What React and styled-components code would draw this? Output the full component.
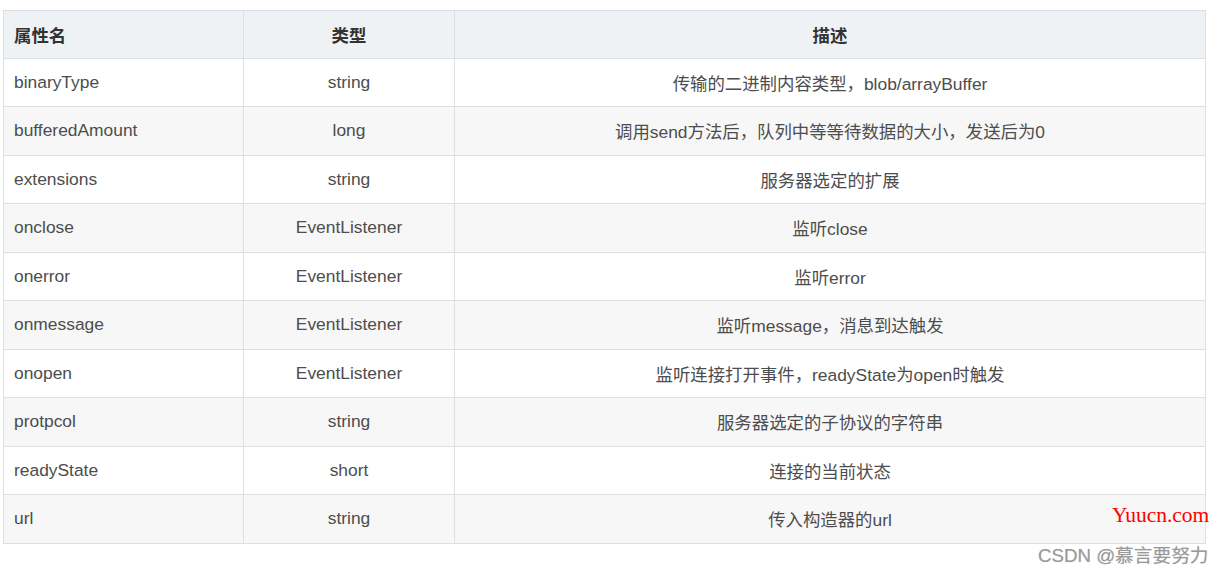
import React from 'react'
import styled, { createGlobalStyle } from 'styled-components'

const GlobalStyle = createGlobalStyle`
  html, body {
    margin: 0;
    padding: 0;
    background: #fff;
  }
  body {
    font-family: "Liberation Sans", Arial, "Noto Sans CJK SC", sans-serif;
  }
`

const Page = styled.div`
  position: relative;
  width: 1222px;
  height: 571px;
  padding: 10px 0 0 3px;
  box-sizing: border-box;
  overflow: hidden;
`

const Table = styled.table`
  border-collapse: collapse;
  table-layout: fixed;
  width: 1202px;
  font-size: 17.4px;
  color: #4d4d4d;
`

const HeadCell = styled.th`
  height: 47.5px;
  padding: 0 10px;
  border: 1px solid #dcdfe3;
  background: #eff2f5;
  color: #333;
  font-weight: bold;
  font-size: 17.4px;
  text-align: ${p => (p.$left ? 'left' : 'center')};
  box-sizing: border-box;
`

const Row = styled.tr`
  background: ${p => (p.$striped ? '#f7f7f7' : '#fff')};
`

const Cell = styled.td`
  height: 48.5px;
  padding: 0 10px;
  border: 1px solid #dcdfe3;
  text-align: ${p => (p.$left ? 'left' : 'center')};
  box-sizing: border-box;
  white-space: nowrap;
`

const Mark = styled.span`
  position: absolute;
  left: 1112px;
  top: 503px;
  color: #ff0000;
  font-family: "Liberation Serif", "Times New Roman", serif;
  font-size: 21.5px;
`

const Credit = styled.span`
  position: absolute;
  left: 1038px;
  top: 540px;
  color: #9a9a9a;
  font-family: "Liberation Sans", "Noto Sans CJK SC", sans-serif;
  font-size: 18.7px;
  text-shadow: 0 0 1px rgba(0, 0, 0, 0.2);
`

const rows = [
  ['binaryType', 'string', '传输的二进制内容类型，blob/arrayBuffer'],
  ['bufferedAmount', 'long', '调用send方法后，队列中等等待数据的大小，发送后为0'],
  ['extensions', 'string', '服务器选定的扩展'],
  ['onclose', 'EventListener', '监听close'],
  ['onerror', 'EventListener', '监听error'],
  ['onmessage', 'EventListener', '监听message，消息到达触发'],
  ['onopen', 'EventListener', '监听连接打开事件，readyState为open时触发'],
  ['protpcol', 'string', '服务器选定的子协议的字符串'],
  ['readyState', 'short', '连接的当前状态'],
  ['url', 'string', '传入构造器的url'],
]

export default function App() {
  return (
    <>
      <GlobalStyle />
      <Page>
        <Table>
          <colgroup>
            <col style={{ width: 240 }} />
            <col style={{ width: 211 }} />
            <col style={{ width: 751 }} />
          </colgroup>
          <thead>
            <tr>
              <HeadCell $left>属性名</HeadCell>
              <HeadCell>类型</HeadCell>
              <HeadCell>描述</HeadCell>
            </tr>
          </thead>
          <tbody>
            {rows.map((r, i) => (
              <Row key={r[0]} $striped={i % 2 === 1}>
                <Cell $left>{r[0]}</Cell>
                <Cell>{r[1]}</Cell>
                <Cell>{r[2]}</Cell>
              </Row>
            ))}
          </tbody>
        </Table>
        <Mark>Yuucn.com</Mark>
        <Credit>CSDN @慕言要努力</Credit>
      </Page>
    </>
  )
}
